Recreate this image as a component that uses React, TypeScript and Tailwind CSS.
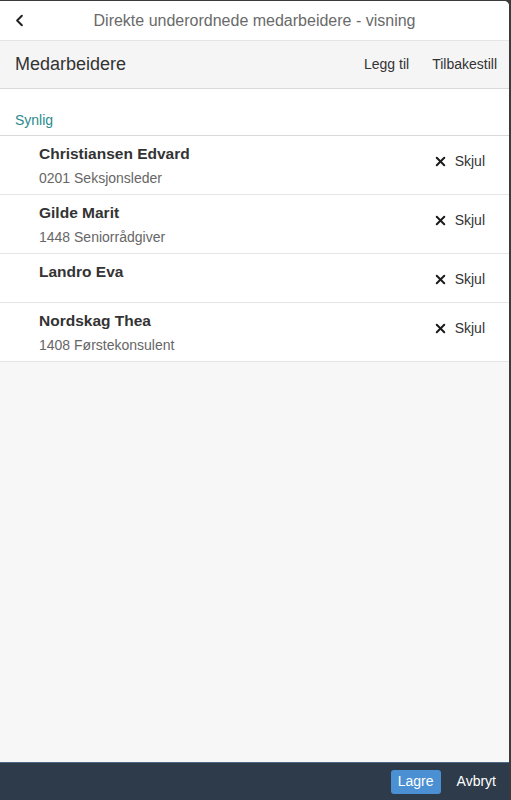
import { X, ChevronLeft } from 'lucide-react';

const people = [
  { name: 'Christiansen Edvard', role: '0201 Seksjonsleder' },
  { name: 'Gilde Marit', role: '1448 Seniorrådgiver' },
  { name: 'Landro Eva', role: '' },
  { name: 'Nordskag Thea', role: '1408 Førstekonsulent' },
];

export default function App() {
  return (
    <div className="h-[800px] w-[511px] bg-[#3b3b3b] pt-px pr-[2px] font-['Liberation_Sans',Arial,sans-serif]">
      <div className="flex h-full flex-col overflow-hidden rounded-tr-[5px] bg-[#f7f7f7]">
        {/* Title bar */}
        <div className="relative flex h-[40px] items-center justify-center border-b border-[#e5e5e5] bg-white">
          <ChevronLeft className="absolute left-[10px] top-[10px] h-[19px] w-[19px] text-[#222]" strokeWidth={2.5} />
          <span className="text-[16px] text-[#6a6a6a]">Direkte underordnede medarbeidere - visning</span>
        </div>

        {/* Toolbar */}
        <div className="flex h-[48px] items-center border-b border-[#d9d9d9] bg-[#f5f5f5] pl-[15px] pr-[12px]">
          <span className="text-[18px] text-[#333]">Medarbeidere</span>
          <div className="ml-auto flex items-center gap-[23px] text-[14px] text-[#333]">
            <span>Legg til</span>
            <span>Tilbakestill</span>
          </div>
        </div>

        {/* List */}
        <div className="bg-white">
          <div className="flex h-[47px] items-end border-b border-[#d9d9d9] pb-[4px] pl-[15px]">
            <span className="text-[14px] text-[#2a8a8c]">Synlig</span>
          </div>
          {people.map((p) => (
            <div
              key={p.name}
              className={`flex items-start border-b border-[#e5e5e5] pl-[39px] pr-[24px] ${p.role ? 'h-[59px]' : 'h-[49px]'}`}
            >
              <div className="flex flex-col pt-[6px]">
                <span className="text-[15.5px] font-bold text-[#333]">{p.name}</span>
                {p.role && <span className="mt-[3px] text-[14px] text-[#666]">{p.role}</span>}
              </div>
              <div className="ml-auto flex items-center gap-[7px] pt-[15px] text-[14px] text-[#333]">
                <X className="h-[15px] w-[15px] text-[#1a1a1a]" strokeWidth={3.2} />
                <span>Skjul</span>
              </div>
            </div>
          ))}
        </div>

        <div className="flex-1" />

        {/* Footer */}
        <div className="flex h-[38px] items-center justify-end gap-[16px] border-t border-[#4c6a86] bg-[#2d3b4a] pr-[13px]">
          <button className="h-[24px] rounded-[3px] bg-[#4a90d2] px-[7px] text-[14px] text-white">Lagre</button>
          <span className="text-[14px] text-white">Avbryt</span>
        </div>
      </div>
    </div>
  );
}
